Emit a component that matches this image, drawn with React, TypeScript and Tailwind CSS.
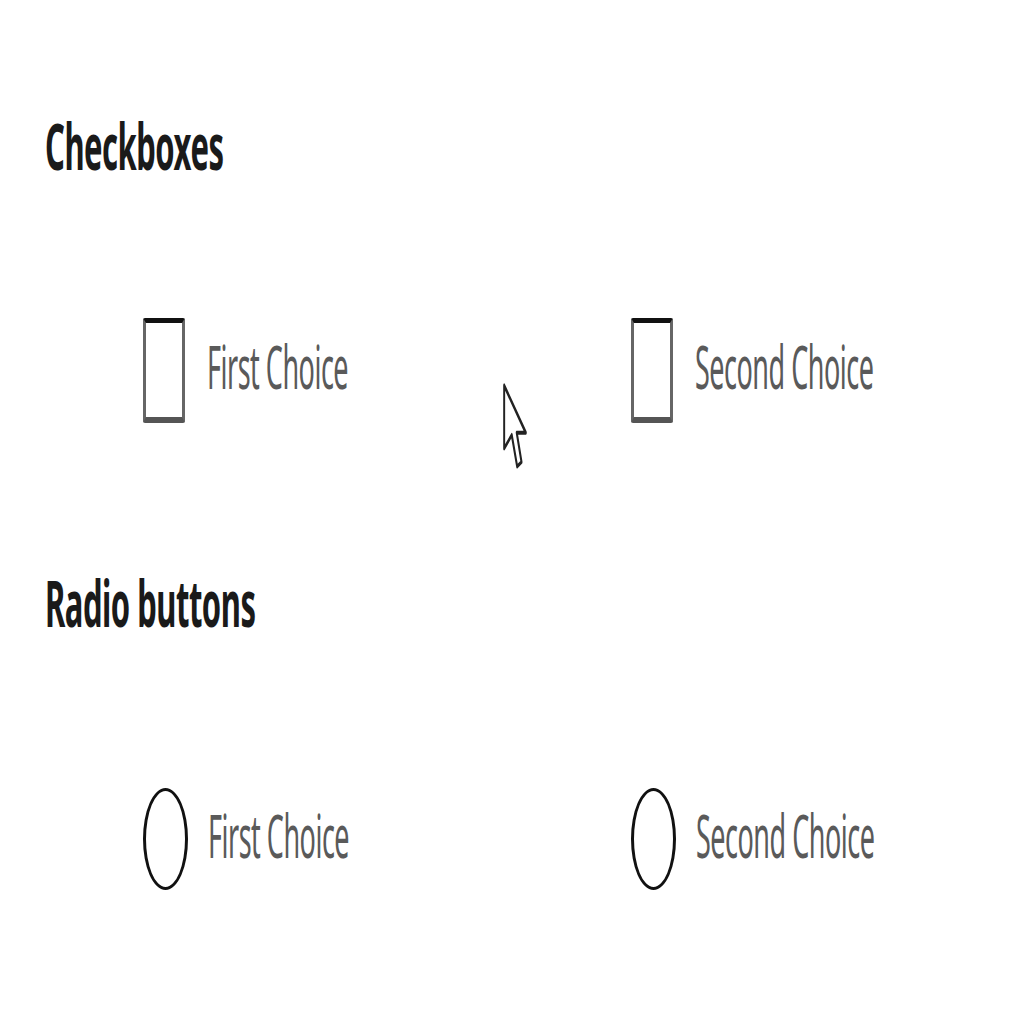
import React from "react";

function Heading({ children }: { children: React.ReactNode }) {
  return (
    <div className="h-[60px] flex items-center pl-[45px]">
      <span className="inline-block text-[31px] font-bold leading-none text-[#1a1a1a] scale-y-[2.1] origin-center tracking-[-0.5px]">
        {children}
      </span>
    </div>
  );
}

function Label({ children }: { children: React.ReactNode }) {
  return (
    <span className="inline-block mb-[10px] text-[27px] leading-none text-[#5a5a5a] scale-y-[2.2] origin-center tracking-[-0.5px]">
      {children}
    </span>
  );
}

function Box() {
  return (
    <div className="w-[42px] h-[105px] border-[3px] border-[#666] border-t-[5px] border-t-[#111] border-b-[6px] border-b-[#555] rounded-[2px] bg-white shrink-0" />
  );
}

function Radio() {
  return <div className="w-[45px] h-[102px] border-[3px] border-[#111] rounded-[50%] bg-white shrink-0" />;
}

export default function App() {
  return (
    <div
      className="relative w-[1024px] h-[1024px] bg-white overflow-hidden"
      style={{ fontFamily: '"Noto Sans", "Open Sans", sans-serif' }}
    >
      <div className="pt-[115px]">
        <Heading>Checkboxes</Heading>
        <div className="mt-[142px] h-[106px] flex items-center">
          <div className="w-[631px] pl-[143px] flex items-center gap-[22px]">
            <Box />
            <Label>First Choice</Label>
          </div>
          <div className="flex items-center gap-[22px]">
            <Box />
            <Label>Second Choice</Label>
          </div>
        </div>
        <div className="mt-[149px]">
          <Heading>Radio buttons</Heading>
        </div>
        <div className="mt-[154px] h-[106px] flex items-center">
          <div className="w-[631px] pl-[143px] flex items-center gap-[20px]">
            <Radio />
            <Label>First Choice</Label>
          </div>
          <div className="flex items-center gap-[20px]">
            <Radio />
            <Label>Second Choice</Label>
          </div>
        </div>
      </div>
      <svg
        className="absolute left-[502px] top-[381px]"
        width="26"
        height="90"
        viewBox="0 0 12 20"
        preserveAspectRatio="none"
      >
        <path
          d="M1 1 L1 15 L4.5 12 L7 19 L9 18 L6.8 11.5 L11 11.5 Z"
          fill="#fff"
          stroke="#222"
          strokeWidth="0.9"
          strokeLinejoin="round"
        />
      </svg>
    </div>
  );
}
